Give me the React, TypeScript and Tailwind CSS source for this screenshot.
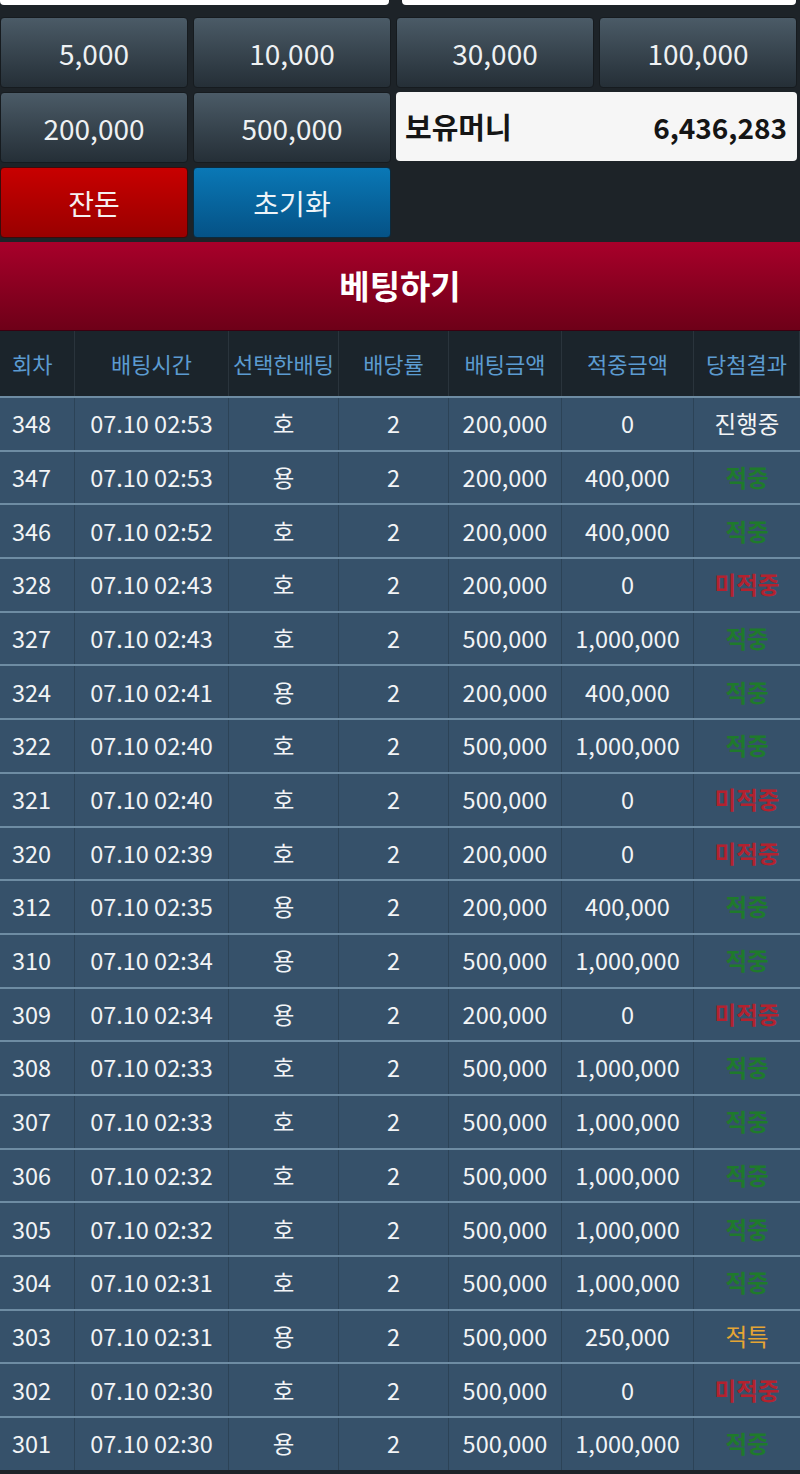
import React from 'react';

type Row = {
  no: number;
  time: string;
  pick: string;
  amount: string;
  win: string;
  result: '진행중' | '적중' | '미적중' | '적특';
};

const rows: Row[] = [
  { no: 348, time: '07.10 02:53', pick: '호', amount: '200,000', win: '0', result: '진행중' },
  { no: 347, time: '07.10 02:53', pick: '용', amount: '200,000', win: '400,000', result: '적중' },
  { no: 346, time: '07.10 02:52', pick: '호', amount: '200,000', win: '400,000', result: '적중' },
  { no: 328, time: '07.10 02:43', pick: '호', amount: '200,000', win: '0', result: '미적중' },
  { no: 327, time: '07.10 02:43', pick: '호', amount: '500,000', win: '1,000,000', result: '적중' },
  { no: 324, time: '07.10 02:41', pick: '용', amount: '200,000', win: '400,000', result: '적중' },
  { no: 322, time: '07.10 02:40', pick: '호', amount: '500,000', win: '1,000,000', result: '적중' },
  { no: 321, time: '07.10 02:40', pick: '호', amount: '500,000', win: '0', result: '미적중' },
  { no: 320, time: '07.10 02:39', pick: '호', amount: '200,000', win: '0', result: '미적중' },
  { no: 312, time: '07.10 02:35', pick: '용', amount: '200,000', win: '400,000', result: '적중' },
  { no: 310, time: '07.10 02:34', pick: '용', amount: '500,000', win: '1,000,000', result: '적중' },
  { no: 309, time: '07.10 02:34', pick: '용', amount: '200,000', win: '0', result: '미적중' },
  { no: 308, time: '07.10 02:33', pick: '호', amount: '500,000', win: '1,000,000', result: '적중' },
  { no: 307, time: '07.10 02:33', pick: '호', amount: '500,000', win: '1,000,000', result: '적중' },
  { no: 306, time: '07.10 02:32', pick: '호', amount: '500,000', win: '1,000,000', result: '적중' },
  { no: 305, time: '07.10 02:32', pick: '호', amount: '500,000', win: '1,000,000', result: '적중' },
  { no: 304, time: '07.10 02:31', pick: '호', amount: '500,000', win: '1,000,000', result: '적중' },
  { no: 303, time: '07.10 02:31', pick: '용', amount: '500,000', win: '250,000', result: '적특' },
  { no: 302, time: '07.10 02:30', pick: '호', amount: '500,000', win: '0', result: '미적중' },
  { no: 301, time: '07.10 02:30', pick: '용', amount: '500,000', win: '1,000,000', result: '적중' },
];

const resultColor: Record<Row['result'], string> = {
  '진행중': 'text-[#f2f4f6] font-normal',
  '적중': 'text-[#1f7a2c] font-bold',
  '미적중': 'text-[#b3222f] font-bold',
  '적특': 'text-[#e5a534] font-normal',
};

const cols = 'grid grid-cols-[75px_154px_110px_110px_113px_132px_106px]';

const ChipButton: React.FC<{ label: string }> = ({ label }) => (
  <button className="h-[71px] rounded-[4px] border border-[#161b1f] bg-gradient-to-b from-[#4b5b67] to-[#252f37] text-[28px] text-[#eef1f3]">
    {label}
  </button>
);

const App: React.FC = () => {
  const headers = ['회차', '배팅시간', '선택한배팅', '배당률', '배팅금액', '적중금액', '당첨결과'];

  return (
    <div
      className="w-[800px] h-[1474px] overflow-hidden bg-[#1d2328]"
      style={{ fontFamily: '"Noto Sans CJK KR", "Noto Sans", sans-serif' }}
    >
      {/* input fields (cut off at top) */}
      <div className="flex h-[5px] gap-[13px]">
        <div className="w-[389px] rounded-b-[4px] bg-white" />
        <div className="w-[394px] rounded-b-[4px] bg-white" />
      </div>

      {/* amount buttons */}
      <div className="mt-[12px] grid grid-cols-[188px_198px_198px_198px] gap-x-[5px] gap-y-[4px]">
        <ChipButton label="5,000" />
        <ChipButton label="10,000" />
        <ChipButton label="30,000" />
        <ChipButton label="100,000" />
        <ChipButton label="200,000" />
        <ChipButton label="500,000" />
        <div className="col-span-2 mb-[2px] flex h-[69px] items-center justify-between rounded-[4px] bg-[#f6f6f6] pl-[9px] pr-[10px] text-[#151515]">
          <span className="text-[29px] font-bold">보유머니</span>
          <span className="text-[28px] font-bold">6,436,283</span>
        </div>
        <button className="h-[71px] rounded-[4px] border border-[#3a0c0c] bg-gradient-to-b from-[#c80000] to-[#990000] text-[28px] text-[#f5f0f0]">
          잔돈
        </button>
        <button className="h-[71px] rounded-[4px] border border-[#0c2a3c] bg-gradient-to-b from-[#0a78b6] to-[#055286] text-[28px] text-[#eef4f8]">
          초기화
        </button>
      </div>

      {/* bet button */}
      <div className="mt-[4px] flex h-[89px] items-center justify-center border-b border-[#3a0010] bg-gradient-to-b from-[#a8002a] to-[#6e0018] text-[33px] font-bold text-white">
        베팅하기
      </div>

      {/* table */}
      <div className={`${cols} h-[65px] bg-[#1b242b] text-[22px] text-[#5b9bd0]`}>
        {headers.map((h, i) => (
          <div
            key={h}
            className={`flex items-center whitespace-nowrap border-r border-[#2a343c] ${i === 0 ? 'pl-3' : 'justify-center'}`}
          >
            {h}
          </div>
        ))}
      </div>
      {rows.map((r) => {
        const cells = [String(r.no), r.time, r.pick, '2', r.amount, r.win];
        return (
          <div
            key={r.no}
            className={`${cols} h-[53.7px] border-t-2 border-[#6e8ca3] bg-[#36516a] text-[23.5px] text-[#f2f4f6]`}
          >
            {cells.map((c, i) => (
              <div
                key={i}
                className={`flex items-center whitespace-nowrap border-r border-[#2c4357] ${i === 0 ? 'pl-3' : 'justify-center'}`}
              >
                {c}
              </div>
            ))}
            <div className={`flex items-center justify-center ${resultColor[r.result]}`}>{r.result}</div>
          </div>
        );
      })}
    </div>
  );
};

export default App;
